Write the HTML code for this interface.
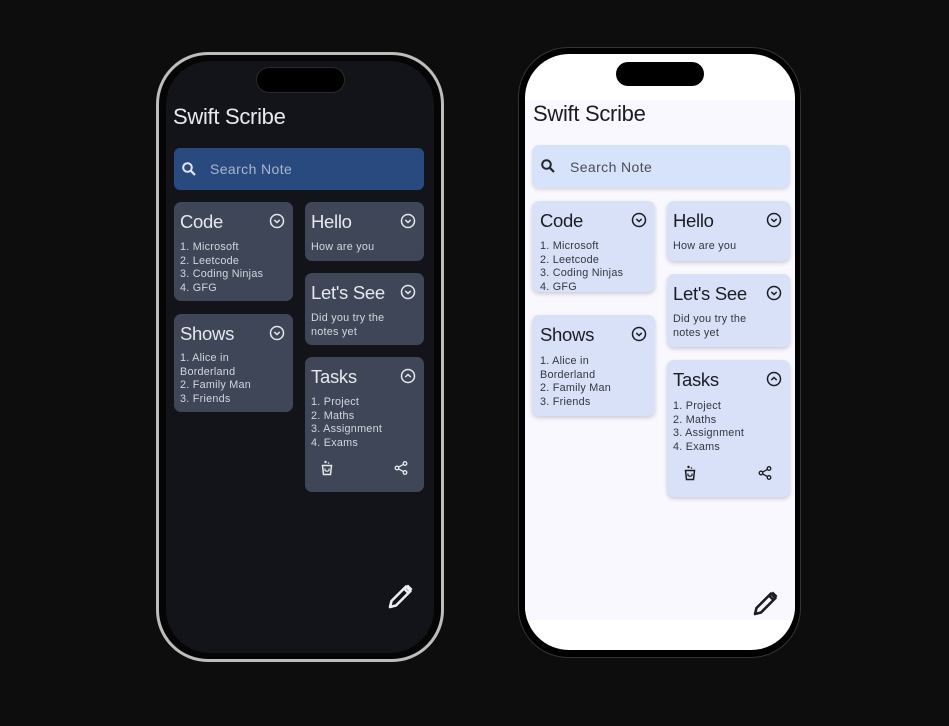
<!DOCTYPE html>
<html><head><meta charset="utf-8"><style>
*{margin:0;padding:0;box-sizing:border-box}
body{width:949px;height:726px;background:#0d0d0d;position:relative;overflow:hidden;font-family:"Liberation Sans",sans-serif}
.a{position:absolute}
.card{position:absolute;border-radius:7px}
.t{position:absolute;left:6px;top:9px;font-size:18.5px;letter-spacing:-0.3px}
.b{position:absolute;left:6px;font-size:10.8px;line-height:13.5px;letter-spacing:0.25px}
.ic{position:absolute;width:16px;height:16px}
.d .card{background:#3f4657}
.d .t{color:#e6e8ee}.d .b{color:#d2d6de}
.l .card{background:#d8e1f7;box-shadow:0 2px 4px rgba(0,0,0,.18)}
.l .t{color:#1b1d23}.l .b{color:#33363e}
</style></head><body>
<svg width="0" height="0" style="position:absolute"><defs>
<symbol id="dn" viewBox="0 0 16 16"><circle cx="8" cy="8" r="6.5" fill="none" stroke="currentColor" stroke-width="1.5"/><path d="M5.3 6.9L8 9.5l2.7-2.6" fill="none" stroke="currentColor" stroke-width="1.5"/></symbol>
<symbol id="up" viewBox="0 0 16 16"><circle cx="8" cy="8" r="6.5" fill="none" stroke="currentColor" stroke-width="1.5"/><path d="M5.3 9.1L8 6.5l2.7 2.6" fill="none" stroke="currentColor" stroke-width="1.5"/></symbol>
<symbol id="bin" viewBox="0 0 16 16"><circle cx="6.5" cy="2" r="1.2" fill="currentColor"/><circle cx="9.5" cy="3" r="0.8" fill="currentColor"/><path d="M3.5 5.5h9l-1 9h-7z" fill="none" stroke="currentColor" stroke-width="1.5"/><path d="M6 8.5v2q2 1.5 4 0v-2" fill="none" stroke="currentColor" stroke-width="1.2"/></symbol>
<symbol id="sh" viewBox="0 0 16 16"><circle cx="12" cy="3.5" r="1.8" fill="none" stroke="currentColor" stroke-width="1.3"/><circle cx="4" cy="8" r="1.8" fill="none" stroke="currentColor" stroke-width="1.3"/><circle cx="12" cy="12.5" r="1.8" fill="none" stroke="currentColor" stroke-width="1.3"/><path d="M5.6 7.1l4.8-2.7M5.6 8.9l4.8 2.7" stroke="currentColor" stroke-width="1.3"/></symbol>
<symbol id="sr" viewBox="0 0 16 16"><circle cx="6.5" cy="6.5" r="4.3" fill="none" stroke="currentColor" stroke-width="2"/><path d="M9.7 9.7l4.3 4.3" stroke="currentColor" stroke-width="2.2"/></symbol>
<symbol id="pen" viewBox="0 0 28 28"><path d="M3 25l1.5-6L19 4.5l4.5 4.5L9 23.5z" fill="none" stroke="currentColor" stroke-width="2.6" stroke-linejoin="round"/><path d="M17 6.5l4.5 4.5" stroke="currentColor" stroke-width="2.6"/><path d="M19 4.5l2-2 4.5 4.5-2 2z" fill="currentColor"/></symbol>
</defs></svg>

<!-- Dark phone -->
<div class="a" style="left:156px;top:52px;width:288px;height:610px;border-radius:52px;border:3px solid #bdbdbd;background:#050505"></div>
<div class="a d" style="left:166px;top:61px;width:268px;height:592px;border-radius:44px;background:#121419;overflow:hidden"></div>
<div class="d">
<div class="a" style="left:256px;top:67px;width:89px;height:26px;border-radius:13px;background:#000;border:1px solid #2a2a2a"></div>
<div class="a" style="left:173px;top:104px;font-size:22px;color:#e8eaee;letter-spacing:-0.3px">Swift Scribe</div>
<div class="a" style="left:174px;top:148px;width:250px;height:42px;border-radius:6px;background:#284a7e"></div>
<svg class="a" style="left:181px;top:161px;color:#e0e6f0" width="16" height="16"><use href="#sr"/></svg>
<div class="a" style="left:210px;top:161px;font-size:14px;color:#a9b6cc;letter-spacing:0.4px">Search Note</div>

<div class="card" style="left:174px;top:202px;width:119px;height:99px"><div class="t">Code</div><svg class="ic" style="right:8px;top:11px;color:#e6e8ee"><use href="#dn"/></svg><div class="b" style="top:39px">1. Microsoft<br>2. Leetcode<br>3. Coding Ninjas<br>4. GFG</div></div>
<div class="card" style="left:305px;top:202px;width:119px;height:59px"><div class="t">Hello</div><svg class="ic" style="right:8px;top:11px;color:#e6e8ee"><use href="#dn"/></svg><div class="b" style="top:39px">How are you</div></div>
<div class="card" style="left:305px;top:273px;width:119px;height:72px"><div class="t">Let's See</div><svg class="ic" style="right:8px;top:11px;color:#e6e8ee"><use href="#dn"/></svg><div class="b" style="top:39px">Did you try the<br>notes yet</div></div>
<div class="card" style="left:174px;top:314px;width:119px;height:98px"><div class="t">Shows</div><svg class="ic" style="right:8px;top:11px;color:#e6e8ee"><use href="#dn"/></svg><div class="b" style="top:38px">1. Alice in<br>Borderland<br>2. Family Man<br>3. Friends</div></div>
<div class="card" style="left:305px;top:357px;width:119px;height:135px"><div class="t">Tasks</div><svg class="ic" style="right:8px;top:11px;color:#e6e8ee"><use href="#up"/></svg><div class="b" style="top:39px">1. Project<br>2. Maths<br>3. Assignment<br>4. Exams</div>
<svg class="ic" style="left:14px;top:103px;color:#e6e8ee"><use href="#bin"/></svg><svg class="ic" style="left:88px;top:103px;color:#e6e8ee"><use href="#sh"/></svg></div>
<svg class="a" style="left:387px;top:582px;color:#eceef2" width="28" height="28"><use href="#pen"/></svg>
</div>

<!-- Light phone -->
<div class="a" style="left:518px;top:47px;width:283px;height:611px;border-radius:50px;background:#000;border:1px solid #333"></div>
<div class="a" style="left:525px;top:54px;width:270px;height:596px;border-radius:44px;background:#fff;overflow:hidden">
<div class="a" style="left:0;top:46px;width:270px;height:520px;background:#f8f8fe"></div>
</div>
<div class="l">
<div class="a" style="left:616px;top:62px;width:88px;height:24px;border-radius:12px;background:#000"></div>
<div class="a" style="left:533px;top:101px;font-size:22px;color:#1b1d23;letter-spacing:-0.3px">Swift Scribe</div>
<div class="a" style="left:532px;top:145px;width:258px;height:43px;border-radius:7px;background:#d6e3fb;box-shadow:0 2px 3px rgba(0,0,0,.12)"></div>
<svg class="a" style="left:540px;top:158px;color:#24272e" width="16" height="16"><use href="#sr"/></svg>
<div class="a" style="left:570px;top:159px;font-size:14px;color:#4a4d55;letter-spacing:0.4px">Search Note</div>

<div class="card" style="left:532px;top:201px;width:123px;height:91px"><div class="t" style="left:8px">Code</div><svg class="ic" style="right:8px;top:11px;color:#1b1d23"><use href="#dn"/></svg><div class="b" style="left:8px;top:39px">1. Microsoft<br>2. Leetcode<br>3. Coding Ninjas<br>4. GFG</div></div>
<div class="card" style="left:667px;top:201px;width:123px;height:60px"><div class="t">Hello</div><svg class="ic" style="right:8px;top:11px;color:#1b1d23"><use href="#dn"/></svg><div class="b" style="top:39px">How are you</div></div>
<div class="card" style="left:667px;top:274px;width:123px;height:73px"><div class="t">Let's See</div><svg class="ic" style="right:8px;top:11px;color:#1b1d23"><use href="#dn"/></svg><div class="b" style="top:39px">Did you try the<br>notes yet</div></div>
<div class="card" style="left:532px;top:315px;width:123px;height:101px"><div class="t" style="left:8px">Shows</div><svg class="ic" style="right:8px;top:11px;color:#1b1d23"><use href="#dn"/></svg><div class="b" style="left:8px;top:40px">1. Alice in<br>Borderland<br>2. Family Man<br>3. Friends</div></div>
<div class="card" style="left:667px;top:360px;width:123px;height:137px"><div class="t">Tasks</div><svg class="ic" style="right:8px;top:11px;color:#1b1d23"><use href="#up"/></svg><div class="b" style="top:40px">1. Project<br>2. Maths<br>3. Assignment<br>4. Exams</div>
<svg class="ic" style="left:15px;top:105px;color:#1b1d23"><use href="#bin"/></svg><svg class="ic" style="left:90px;top:105px;color:#1b1d23"><use href="#sh"/></svg></div>
<svg class="a" style="left:752px;top:589px;color:#1b1d23" width="28" height="28"><use href="#pen"/></svg>
</div>
</body></html>
